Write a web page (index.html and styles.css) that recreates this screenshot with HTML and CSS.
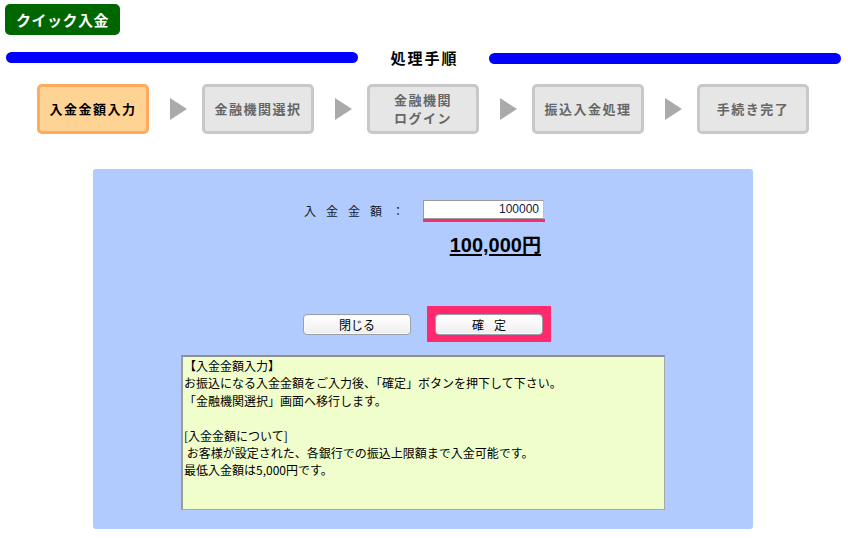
FILE: index.html
```html
<!DOCTYPE html>
<html lang="ja">
<head>
<meta charset="utf-8">
<title>クイック入金</title>
<link rel="stylesheet" href="styles.css">
</head>
<body>
<div class="page">
  <header class="top">
    <div class="title">クイック入金</div>
  </header>
  <div class="process">
    <div class="bar bar-left"></div>
    <div class="process-title">処理手順</div>
    <div class="bar bar-right"></div>
  </div>
  <div class="steps">
    <div class="step active">入金金額入力</div>
    <div class="arrow"></div>
    <div class="step">金融機関選択</div>
    <div class="arrow"></div>
    <div class="step two">金融機関<br>ログイン</div>
    <div class="arrow"></div>
    <div class="step">振込入金処理</div>
    <div class="arrow"></div>
    <div class="step">手続き完了</div>
  </div>
  <main class="panel">
    <div class="form-row">
      <div class="label">入金金額：</div>
      <div class="input-wrap"><div class="input">100000</div></div>
    </div>
    <div class="amount-row">
      <div class="amount"><span class="num">100,000</span>円</div>
    </div>
    <div class="buttons">
      <div class="btn">閉じる</div>
      <div class="highlight"><div class="btn spaced">確定</div></div>
    </div>
    <div class="info">
      <p>【入金金額入力】</p>
      <p>お振込になる入金金額をご入力後、「確定」ボタンを押下して下さい。</p>
      <p>「金融機関選択」画面へ移行します。</p>
      <p>&nbsp;</p>
      <p>[入金金額について]</p>
      <p>&nbsp;お客様が設定された、各銀行での振込上限額まで入金可能です。</p>
      <p>最低入金額は5,000円です。</p>
    </div>
  </main>
</div>
</body>
</html>
```
FILE: styles.css
```css
* { box-sizing: border-box; }
html, body { margin: 0; padding: 0; background: #fff; }
body {
  font-family: "Noto Sans CJK JP", "Noto Sans", sans-serif;
  color: #000;
  width: 848px;
  height: 538px;
  overflow: hidden;
}
.top { padding: 4px 0 0 5px; height: 46px; }
.title {
  width: 115px;
  height: 31px;
  background: #006600;
  border-radius: 5px;
  color: #fff;
  font-weight: bold;
  font-size: 15px;
  line-height: 31px;
  text-align: center;
  letter-spacing: 0.5px;
}
.process {
  display: flex;
  align-items: center;
  height: 22px;
  padding-left: 6px;
}
.bar {
  height: 11px;
  background: #0000ff;
  border-radius: 6px;
  width: 352px;
}
.bar-right { margin-top: 3px; }
.process-title {
  width: 131px;
  text-align: center;
  font-weight: bold;
  font-size: 15px;
  letter-spacing: 2px;
  padding-left: 2px;
  line-height: 20px;
  margin-top: 2px;
}
.steps {
  display: flex;
  align-items: center;
  padding-left: 37px;
  margin-top: 16px;
  height: 50px;
}
.step {
  width: 112px;
  height: 50px;
  border: 3px solid #c8c8c8;
  background: #e6e6e6;
  border-radius: 5px;
  color: #666;
  font-weight: bold;
  font-size: 13px;
  letter-spacing: 1.5px;
  display: flex;
  align-items: center;
  justify-content: center;
  text-align: center;
  line-height: 18px;
}
.step.active {
  background: #ffd393;
  border-color: #ffaa5e;
  color: #000;
}
.arrow {
  width: 0;
  height: 0;
  margin: 0 15px 0 21px;
  border-top: 11px solid transparent;
  border-bottom: 11px solid transparent;
  border-left: 17px solid #aaaaaa;
}
.panel {
  margin: 35px 0 0 93px;
  width: 660px;
  height: 360px;
  background: #b1cbff;
  border-radius: 3px;
  padding-top: 31px;
}
.form-row {
  display: flex;
  align-items: flex-start;
  padding-left: 211px;
  height: 22px;
}
.label {
  width: 119px;
  font-size: 12px;
  letter-spacing: 10px;
  line-height: 20px;
  color: #102030;
  padding-top: 1px;
}
.input-wrap {
  width: 122px;
  height: 22px;
  border-bottom: 3px solid #ff2a6e;
}
.input {
  width: 121px;
  height: 19px;
  background: #fff;
  border: 1px solid #9a9a9a;
  border-right-color: #c0c0c0;
  font-family: "Liberation Sans", Arial, sans-serif;
  font-size: 12px;
  line-height: 17px;
  text-align: right;
  padding-right: 4px;
  color: #102040;
}
.amount-row {
  padding-left: 330px;
  margin-top: 10px;
  height: 24px;
}
.amount {
  width: 118px;
  text-align: right;
  font-size: 19px;
  font-weight: bold;
  line-height: 24px;
  text-decoration: underline;
  text-decoration-thickness: 2px;
  text-underline-offset: 2px;
}
.amount .num { font-family: "Liberation Sans", Arial, sans-serif; font-size: 20px; }
.buttons {
  display: flex;
  align-items: center;
  padding-left: 210px;
  gap: 16px;
  margin-top: 50px;
}
.btn {
  width: 108px;
  height: 21px;
  border: 1px solid #9aa0a8;
  border-radius: 4px;
  background: linear-gradient(#ffffff, #eeeeee);
  box-shadow: inset 0 0 0 1px #fafafa;
  font-size: 12px;
  line-height: 19px;
  text-align: center;
  color: #000;
}
.btn.spaced { letter-spacing: 10px; padding-left: 10px; }
.highlight {
  background: #ff2a6e;
  padding: 8px 8px 7px 8px;
}
.info {
  margin: 13px 0 0 88px;
  width: 484px;
  height: 155px;
  background: #f0fecc;
  border: 1px solid #a8a8a8;
  border-top: 2px solid #8f8f8f;
  border-left: 2px solid #9a9a9a;
  padding: 0 0 0 1px;
  font-size: 12px;
  line-height: 17.4px;
}
.info p { margin: 0; white-space: pre; }
```
